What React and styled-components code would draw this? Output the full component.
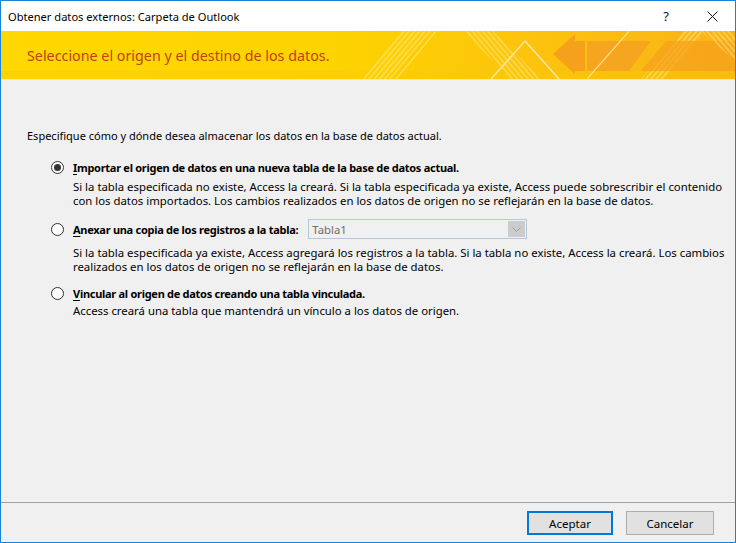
import * as React from 'react';
import styled, {createGlobalStyle} from 'styled-components';

const GlobalStyle = createGlobalStyle`
    html, body {
        margin: 0;
        padding: 0;
        background: #ffffff;
    }
    body {
        font-family: "Noto Sans", "Open Sans", sans-serif;
        font-size: 11px;
        color: #000;
    }
`;

const Window = styled.div`
    width: 736px;
    height: 543px;
    box-sizing: border-box;
    border: 1px solid #1883d7;
    display: flex;
    flex-direction: column;
    background: #f0f0f0;
`;

const TitleBar = styled.div`
    height: 30px;
    flex-shrink: 0;
    background: #ffffff;
    display: flex;
    align-items: center;
    padding-left: 7px;
`;

const TitleText = styled.div`
    flex: 1;
    font-size: 11.1px;
    color: #000;
`;

const TitleButton = styled.div`
    width: 46px;
    height: 30px;
    display: flex;
    align-items: center;
    justify-content: center;
    font-size: 13px;
    color: #111;
`;

const Banner = styled.div`
    position: relative;
    height: 48px;
    flex-shrink: 0;
    background: linear-gradient(90deg, #fed800 0%, #fdd300 45%, #fcc50c 70%, #f9b217 100%);
    display: flex;
    align-items: center;
    padding-left: 26px;
    overflow: hidden;
    border-bottom: 1px solid #e6e6e6;
`;

const BannerArt = styled.svg`
    position: absolute;
    left: 0;
    top: 0;
`;

const BannerTitle = styled.div`
    position: relative;
    font-size: 14.3px;
    color: #c1420c;
`;

const Body = styled.div`
    flex: 1;
    padding: 48px 0 0 26px;
`;

const Intro = styled.div`
    line-height: 16px;
    font-size: 11px;
`;

const Options = styled.div`
    margin-top: 15px;
    padding-left: 24px;
    display: flex;
    flex-direction: column;
`;

const Option = styled.div`
    display: flex;
    flex-direction: column;
    margin-top: ${({offset}) => offset}px;
`;

const OptionRow = styled.div`
    display: flex;
    align-items: center;
    height: ${({tall}) => (tall ? '22px' : '16px')};
`;

const Radio = styled.span`
    width: 13px;
    height: 13px;
    box-sizing: border-box;
    border-radius: 50%;
    border: 1px solid #333;
    background: #fff;
    display: flex;
    align-items: center;
    justify-content: center;
    margin-right: 9px;
    flex-shrink: 0;

    &::after {
        content: '';
        display: ${({checked}) => (checked ? 'block' : 'none')};
        width: 7px;
        height: 7px;
        border-radius: 50%;
        background: #333;
    }
`;

const OptionLabel = styled.span`
    font-weight: bold;
    font-size: 11px;
    letter-spacing: -0.28px;
    u {
        text-decoration: underline;
        text-underline-offset: 2px;
    }
`;

const Description = styled.div`
    padding-left: 22px;
    margin-top: ${({gap}) => gap}px;
    line-height: 14px;
    font-size: 11.36px;
`;

const Select = styled.div`
    margin-left: 10px;
    width: 219px;
    height: 20px;
    box-sizing: border-box;
    border: 1px solid #b4c6dc;
    background: #f0f0f0;
    display: flex;
    align-items: center;
    padding: 1px;
`;

const SelectValue = styled.span`
    flex: 1;
    padding-left: 2px;
    color: #6d6d6d;
    font-size: 11.3px;
`;

const SelectArrow = styled.span`
    width: 17px;
    height: 16px;
    background: #cccccc;
    display: flex;
    align-items: center;
    justify-content: center;
`;

const Footer = styled.div`
    height: 39px;
    flex-shrink: 0;
    border-top: 1px solid #a0a0a0;
    display: flex;
    align-items: center;
    justify-content: flex-end;
    gap: 13px;
    padding-right: 21px;
`;

const Button = styled.button`
    width: ${({primary}) => (primary ? '86px' : '88px')};
    height: 24px;
    box-sizing: border-box;
    background: #e1e1e1;
    border: ${({primary}) => (primary ? '2px solid #0078d7' : '1px solid #adadad')};
    font-family: inherit;
    font-size: 11.5px;
    color: #000;
    padding: 0;
    margin-top: 1px;
`;

// yellow header artwork: striped diagonal bands, thin light strokes and an arrow
const BannerDecor = () => <BannerArt width="734" height="48" viewBox="0 0 734 48">
    <defs>
        <pattern id="stripesUp" width="4" height="4" patternUnits="userSpaceOnUse" patternTransform="rotate(40)">
            <rect width="1.6" height="4" fill="#ffe98a" opacity="0.6"/>
        </pattern>
        <pattern id="stripesDown" width="4" height="4" patternUnits="userSpaceOnUse" patternTransform="rotate(-40)">
            <rect width="1.6" height="4" fill="#ffe98a" opacity="0.55"/>
        </pattern>
    </defs>
    <rect x="0" y="40" width="734" height="8" fill="#fcc90a" opacity="0.35"/>
    <polygon points="360,48 400,0 430,0 390,48" fill="url(#stripesUp)"/>
    <line x1="395" y1="48" x2="435" y2="0" stroke="#ffe25a" strokeWidth="1.2"/>
    <polygon points="462,0 492,0 540,48 510,48" fill="url(#stripesDown)"/>
    <line x1="490" y1="48" x2="524" y2="10" stroke="#ffe6a8" strokeWidth="1.5"/>
    <line x1="524" y1="10" x2="558" y2="48" stroke="#ffe6a8" strokeWidth="1.5"/>
    {/* left pointing arrow */}
    <polygon points="552,23 574,3 574,10 584,10 584,40 574,40 574,43" fill="#f5a11c"/>
    <polygon points="586,10 650,10 628,40 586,40" fill="#f6a51f"/>
    <line x1="586" y1="48" x2="630" y2="-2" stroke="#ffe08a" strokeWidth="1.2"/>
    <polygon points="640,48 682,0 705,0 663,48" fill="url(#stripesUp)"/>
    <polygon points="665,10 734,10 734,40 640,40" fill="#f6a11c" opacity="0.75"/>
    <polygon points="700,0 730,0 734,4 734,30" fill="url(#stripesDown)"/>
</BannerArt>;

const App = () => {
    return <>
        <GlobalStyle/>
        <Window>
            <TitleBar>
                <TitleText>Obtener datos externos: Carpeta de Outlook</TitleText>
                <TitleButton>?</TitleButton>
                <TitleButton>
                    <svg width="11" height="11" viewBox="0 0 11 11">
                        <path d="M0.5 0.5 L10.5 10.5 M10.5 0.5 L0.5 10.5" stroke="#111" strokeWidth="1"/>
                    </svg>
                </TitleButton>
            </TitleBar>
            <Banner>
                <BannerDecor/>
                <BannerTitle>Seleccione el origen y el destino de los datos.</BannerTitle>
            </Banner>
            <Body>
                <Intro>Especifique cómo y dónde desea almacenar los datos en la base de datos actual.</Intro>
                <Options>
                    <Option offset={0}>
                        <OptionRow>
                            <Radio checked/>
                            <OptionLabel><u>I</u>mportar el origen de datos en una nueva tabla de la base de datos actual.</OptionLabel>
                        </OptionRow>
                        <Description gap={5}>
                            Si la tabla especificada no existe, Access la creará. Si la tabla especificada ya existe, Access puede sobrescribir el contenido<br/>
                            con los datos importados. Los cambios realizados en los datos de origen no se reflejarán en la base de datos.
                        </Description>
                    </Option>
                    <Option offset={10}>
                        <OptionRow tall>
                            <Radio/>
                            <OptionLabel><u>A</u>nexar una copia de los registros a la tabla:</OptionLabel>
                            <Select>
                                <SelectValue>Tabla1</SelectValue>
                                <SelectArrow>
                                    <svg width="9" height="5" viewBox="0 0 9 5">
                                        <path d="M0.5 0.5 L4.5 4.5 L8.5 0.5" fill="none" stroke="#a0a0a0" strokeWidth="1"/>
                                    </svg>
                                </SelectArrow>
                            </Select>
                        </OptionRow>
                        <Description gap={6}>
                            Si la tabla especificada ya existe, Access agregará los registros a la tabla. Si la tabla no existe, Access la creará. Los cambios<br/>
                            realizados en los datos de origen no se reflejarán en la base de datos.
                        </Description>
                    </Option>
                    <Option offset={11}>
                        <OptionRow>
                            <Radio/>
                            <OptionLabel><u>V</u>incular al origen de datos creando una tabla vinculada.</OptionLabel>
                        </OptionRow>
                        <Description gap={3}>
                            Access creará una tabla que mantendrá un vínculo a los datos de origen.
                        </Description>
                    </Option>
                </Options>
            </Body>
            <Footer>
                <Button primary>Aceptar</Button>
                <Button>Cancelar</Button>
            </Footer>
        </Window>
    </>;
};

export default App;
